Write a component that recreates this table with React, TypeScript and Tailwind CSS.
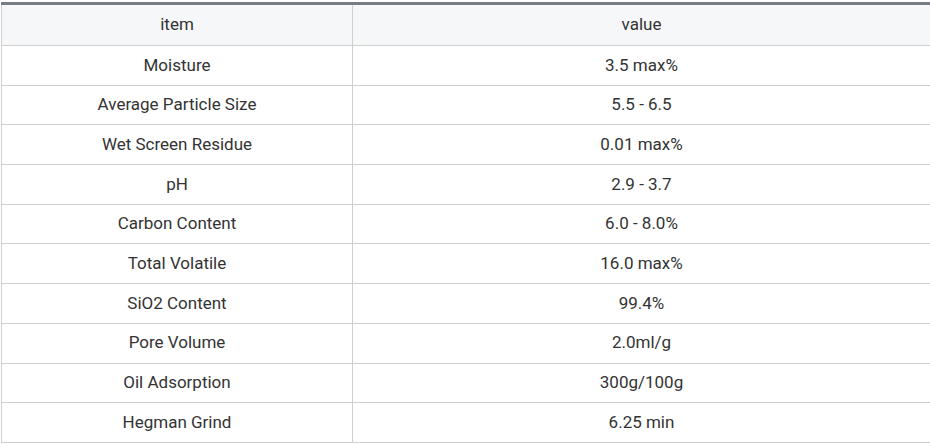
const rows: [string, string][] = [
  ['Moisture', '3.5 max%'],
  ['Average Particle Size', '5.5 - 6.5'],
  ['Wet Screen Residue', '0.01 max%'],
  ['pH', '2.9 - 3.7'],
  ['Carbon Content', '6.0 - 8.0%'],
  ['Total Volatile', '16.0 max%'],
  ['SiO2 Content', '99.4%'],
  ['Pore Volume', '2.0ml/g'],
  ['Oil Adsorption', '300g/100g'],
  ['Hegman Grind', '6.25 min'],
]

export default function App() {
  return (
    <div className="w-[930px] h-[444px] overflow-hidden bg-white pt-[2px] pl-[1px]" style={{ fontFamily: 'Roboto, "Liberation Sans", sans-serif' }}>
      <table className="w-[930px] border-collapse text-[17px] text-[#333]">
        <thead>
          <tr className="bg-[#f6f7f9]">
            <th className="h-[42px] w-[351px] border border-[#cfcfcf] border-t-[3px] border-t-[#767b86] font-normal text-center">item</th>
            <th className="h-[42px] border border-[#cfcfcf] border-t-[3px] border-t-[#767b86] font-normal text-center">value</th>
          </tr>
        </thead>
        <tbody>
          {rows.map(([item, value]) => (
            <tr key={item}>
              <td className="h-[39.7px] border border-[#cfcfcf] text-center">{item}</td>
              <td className="h-[39.7px] border border-[#cfcfcf] text-center">{value}</td>
            </tr>
          ))}
        </tbody>
      </table>
    </div>
  )
}
